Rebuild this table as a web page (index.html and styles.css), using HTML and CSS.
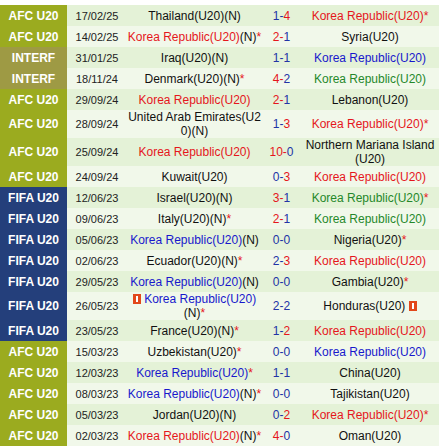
FILE: index.html
```html
<!DOCTYPE html>
<html>
<head>
<meta charset="utf-8">
<link rel="stylesheet" href="styles.css">
</head>
<body>
<div class="top"></div>
<table class="matches">
<colgroup><col class="c-comp"><col class="c-date"><col class="c-home"><col class="c-score"><col class="c-away"></colgroup>
<tbody>
<tr class="odd"><td class="comp afc">AFC U20</td><td class="date">17/02/25</td><td class="team">Thailand(U20)(N)</td><td class="score"><span class="b">1-</span><span class="r">4</span></td><td class="team r">Korea Republic(U20)*</td></tr>
<tr class="even"><td class="comp afc">AFC U20</td><td class="date">14/02/25</td><td class="team"><span class="r">Korea Republic(U20)</span>(N)<span class="r">*</span></td><td class="score"><span class="r">2-</span><span class="b">1</span></td><td class="team">Syria(U20)</td></tr>
<tr class="odd"><td class="comp interf">INTERF</td><td class="date">31/01/25</td><td class="team">Iraq(U20)(N)</td><td class="score"><span class="b">1-1</span></td><td class="team bl">Korea Republic(U20)</td></tr>
<tr class="even"><td class="comp interf">INTERF</td><td class="date">18/11/24</td><td class="team">Denmark(U20)(N)<span class="r">*</span></td><td class="score"><span class="r">4-</span><span class="b">2</span></td><td class="team g">Korea Republic(U20)</td></tr>
<tr class="odd"><td class="comp afc">AFC U20</td><td class="date">29/09/24</td><td class="team r">Korea Republic(U20)</td><td class="score"><span class="r">2-</span><span class="b">1</span></td><td class="team">Lebanon(U20)</td></tr>
<tr class="even tall"><td class="comp afc">AFC U20</td><td class="date">28/09/24</td><td class="team">United Arab Emirates(U2<br>0)(N)</td><td class="score"><span class="b">1-</span><span class="r">3</span></td><td class="team r">Korea Republic(U20)*</td></tr>
<tr class="odd tall"><td class="comp afc">AFC U20</td><td class="date">25/09/24</td><td class="team r">Korea Republic(U20)</td><td class="score"><span class="r">10-</span><span class="b">0</span></td><td class="team">Northern Mariana Island<br>(U20)</td></tr>
<tr class="even"><td class="comp afc">AFC U20</td><td class="date">24/09/24</td><td class="team">Kuwait(U20)</td><td class="score"><span class="b">0-</span><span class="r">3</span></td><td class="team r">Korea Republic(U20)</td></tr>
<tr class="odd"><td class="comp fifa">FIFA U20</td><td class="date">12/06/23</td><td class="team">Israel(U20)(N)</td><td class="score"><span class="r">3-</span><span class="b">1</span></td><td class="team"><span class="g">Korea Republic(U20)</span><span class="r">*</span></td></tr>
<tr class="even"><td class="comp fifa">FIFA U20</td><td class="date">09/06/23</td><td class="team">Italy(U20)(N)<span class="r">*</span></td><td class="score"><span class="r">2-</span><span class="b">1</span></td><td class="team g">Korea Republic(U20)</td></tr>
<tr class="odd"><td class="comp fifa">FIFA U20</td><td class="date">05/06/23</td><td class="team"><span class="bl">Korea Republic(U20)</span>(N)</td><td class="score"><span class="b">0-0</span></td><td class="team">Nigeria(U20)<span class="r">*</span></td></tr>
<tr class="even"><td class="comp fifa">FIFA U20</td><td class="date">02/06/23</td><td class="team">Ecuador(U20)(N)<span class="r">*</span></td><td class="score"><span class="b">2-</span><span class="r">3</span></td><td class="team r">Korea Republic(U20)</td></tr>
<tr class="odd"><td class="comp fifa">FIFA U20</td><td class="date">29/05/23</td><td class="team"><span class="bl">Korea Republic(U20)</span>(N)</td><td class="score"><span class="b">0-0</span></td><td class="team">Gambia(U20)<span class="r">*</span></td></tr>
<tr class="even tall"><td class="comp fifa">FIFA U20</td><td class="date">26/05/23</td><td class="team"><svg class="card" width="8" height="10" viewBox="0 0 8 10"><rect width="8" height="10" fill="#e2481a"/><rect x="3" y="2" width="2" height="6" fill="#fff"/></svg> <span class="bl">Korea Republic(U20)</span><br>(N)<span class="r">*</span></td><td class="score"><span class="b">2-2</span></td><td class="team">Honduras(U20) <svg class="card" width="8" height="10" viewBox="0 0 8 10"><rect width="8" height="10" fill="#e2481a"/><rect x="3" y="2" width="2" height="6" fill="#fff"/></svg></td></tr>
<tr class="odd"><td class="comp fifa">FIFA U20</td><td class="date">23/05/23</td><td class="team">France(U20)(N)<span class="r">*</span></td><td class="score"><span class="b">1-</span><span class="r">2</span></td><td class="team r">Korea Republic(U20)</td></tr>
<tr class="even"><td class="comp afc">AFC U20</td><td class="date">15/03/23</td><td class="team">Uzbekistan(U20)<span class="r">*</span></td><td class="score"><span class="b">0-0</span></td><td class="team bl">Korea Republic(U20)</td></tr>
<tr class="odd"><td class="comp afc">AFC U20</td><td class="date">12/03/23</td><td class="team"><span class="bl">Korea Republic(U20)</span><span class="r">*</span></td><td class="score"><span class="b">1-1</span></td><td class="team">China(U20)</td></tr>
<tr class="even"><td class="comp afc">AFC U20</td><td class="date">08/03/23</td><td class="team"><span class="bl">Korea Republic(U20)</span>(N)<span class="r">*</span></td><td class="score"><span class="b">0-0</span></td><td class="team">Tajikistan(U20)</td></tr>
<tr class="odd"><td class="comp afc">AFC U20</td><td class="date">05/03/23</td><td class="team">Jordan(U20)(N)</td><td class="score"><span class="b">0-</span><span class="r">2</span></td><td class="team r">Korea Republic(U20)*</td></tr>
<tr class="even"><td class="comp afc">AFC U20</td><td class="date">02/03/23</td><td class="team"><span class="r">Korea Republic(U20)</span>(N)<span class="r">*</span></td><td class="score"><span class="r">4-</span><span class="b">0</span></td><td class="team">Oman(U20)</td></tr>
</tbody>
</table>
</body>
</html>
```

FILE: styles.css
```css
html, body {
  margin: 0;
  padding: 0;
  background: #fff;
}
body {
  font-family: "Liberation Sans", Arial, sans-serif;
  font-size: 12px;
  color: #111;
}
.top {
  height: 5px;
}
.matches {
  width: 439px;
  border-collapse: collapse;
  table-layout: fixed;
}
.c-comp { width: 67px; }
.c-date { width: 60px; }
.c-home { width: 135px; }
.c-score { width: 39px; }
.c-away { width: 138px; }
.matches td {
  padding: 0;
  height: 21px;
  line-height: 14px;
  text-align: center;
  vertical-align: middle;
  white-space: nowrap;
  overflow: hidden;
}
.matches tr.tall td {
  height: 28px;
}
.odd td { background: #e4f2d7; }
.even td { background: #f1f8ea; }
.matches td.comp {
  color: #fff;
  font-weight: bold;
  font-size: 12px;
}
.matches td.afc { background: #9bab1f; }
.matches td.interf { background: #9e9a44; }
.matches td.fifa { background: #243f7b; }
.date {
  font-size: 11px;
  color: #222;
}
.team { color: #111; }
.r { color: #e5161c; }
.bl { color: #1818cc; }
.g { color: #25882a; }
.score .b { color: #2233a6; }
.score .r { color: #e5161c; }
.card {
  vertical-align: -1px;
}
```
